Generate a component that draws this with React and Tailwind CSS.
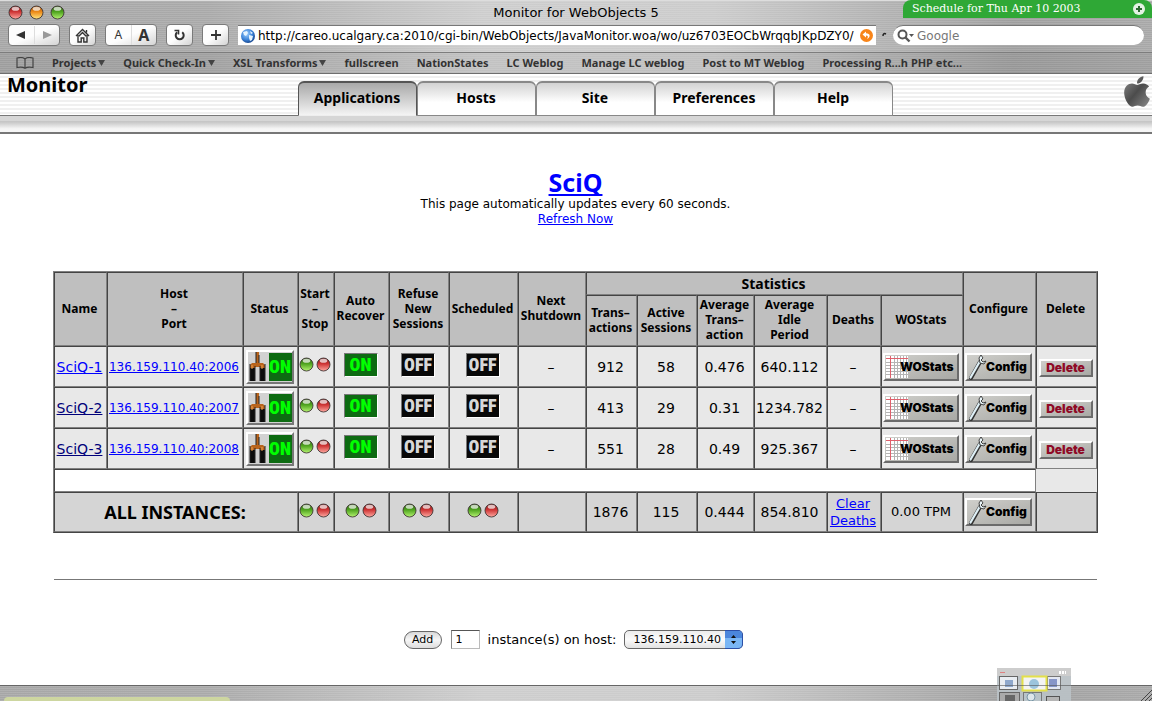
import React, { useState } from "react";
import { FaApple } from "react-icons/fa";

const bookmarks = [
  { label: "Projects", menu: true },
  { label: "Quick Check-In", menu: true },
  { label: "XSL Transforms", menu: true },
  { label: "fullscreen" },
  { label: "NationStates" },
  { label: "LC Weblog" },
  { label: "Manage LC weblog" },
  { label: "Post to MT Weblog" },
  { label: "Processing R...h PHP etc..." },
];

const tabs = ["Applications", "Hosts", "Site", "Preferences", "Help"];

const instances = [
  { name: "SciQ-1", port: 2006, transactions: "912", sessions: "58", average: "0.476", idle: "640.112" },
  { name: "SciQ-2", port: 2007, transactions: "413", sessions: "29", average: "0.31", idle: "1234.782", visited: true },
  { name: "SciQ-3", port: 2008, transactions: "551", sessions: "28", average: "0.49", idle: "925.367", visited: true },
];

const metal =
  "bg-[repeating-linear-gradient(0deg,rgba(255,255,255,0.12)_0px,rgba(255,255,255,0.12)_1px,transparent_1px,transparent_2px),linear-gradient(90deg,#a6a6a6_0%,#a9a9a9_18%,#cdcdcd_42%,#cbcbcb_62%,#9f9f9f_88%,#a8a8a8_100%)]";
const cell =
  "border border-t-[#444] border-l-[#444] border-r-[#808080] border-b-[#808080] py-0 pl-0 pr-[2px] text-center align-middle";
const head = `${cell} pb-[2px] bg-[#bfbfbf] font-['Noto_Sans',sans-serif] text-xs leading-[15px] font-bold`;
const data = `${cell} bg-[#e8e8e8]`;
const total = `${cell} bg-[#d5d5d5]`;
const link = "text-[#0000ff] underline [text-decoration-skip-ink:none]";
const bevel = "border-2 border-t-white border-l-white border-r-[#6b6b6b] border-b-[#6b6b6b] bg-linear-to-br from-[#cfcfcb] to-[#a9a9a5]";
const toolButton =
  "flex h-[22px] shrink-0 items-center justify-center rounded border border-[#7a7a7a] bg-linear-to-br from-[#fdfdfd] from-50% to-[#d4d4d4] text-[#333]";

// Shared gradients for the glass lights and the logo
const Gradients = () => (
  <svg className="absolute h-0 w-0" aria-hidden="true">
    <defs>
      <linearGradient id="green" x1="0" y1="0" x2="0" y2="1">
        <stop offset="0" stopColor="#2f5a14" />
        <stop offset="0.45" stopColor="#4fa51f" />
        <stop offset="1" stopColor="#b6f472" />
      </linearGradient>
      <linearGradient id="red" x1="0" y1="0" x2="0" y2="1">
        <stop offset="0" stopColor="#7a1414" />
        <stop offset="0.45" stopColor="#cf3535" />
        <stop offset="1" stopColor="#ffaaa2" />
      </linearGradient>
      <linearGradient id="amber" x1="0" y1="0" x2="0" y2="1">
        <stop offset="0" stopColor="#9a4a05" />
        <stop offset="0.45" stopColor="#ee8a18" />
        <stop offset="1" stopColor="#ffe680" />
      </linearGradient>
      <linearGradient id="steel" x1="0" y1="0" x2="1" y2="1">
        <stop offset="0" stopColor="#8c8c8c" />
        <stop offset="0.5" stopColor="#4c4c4c" />
        <stop offset="1" stopColor="#8a8a8a" />
      </linearGradient>
      <radialGradient id="globe" cx="0.4" cy="0.35" r="0.7">
        <stop offset="0" stopColor="#9fd0ff" />
        <stop offset="0.6" stopColor="#3a82d8" />
        <stop offset="1" stopColor="#123f86" />
      </radialGradient>
    </defs>
  </svg>
);

const Light = ({ color, label }) => (
  <button aria-label={label} className="block">
    <svg width="15" height="15" viewBox="0 0 15 15">
      <circle cx="7.5" cy="7.5" r="6.5" fill={`url(#${color})`} stroke="#3a3030" strokeOpacity="0.85" />
      <ellipse cx="7.5" cy="3.8" rx="3.8" ry="2" fill="#fff" fillOpacity="0.7" />
    </svg>
  </button>
);

const StartStop = () => (
  <div className="flex justify-center gap-[2px] pb-1">
    <Light color="green" label="Start" />
    <Light color="red" label="Stop" />
  </div>
);

const Toggle = ({ initial }) => {
  const [on, setOn] = useState(initial);
  return (
    <div className="flex justify-center pb-1">
      <button
        onClick={() => setOn(!on)}
        className={`h-6 w-[34px] border border-t-[#777] border-l-[#777] border-r-white border-b-white font-['Liberation_Sans_Narrow','Roboto_Condensed',sans-serif] text-lg leading-[22px] font-black ${
          on ? "bg-[#0d6b12] text-[#00ff00]" : "bg-[#080808] text-[#d8d8d8]"
        }`}
      >
        {on ? "ON" : "OFF"}
      </button>
    </div>
  );
};

const Pliers = () => (
  <svg width="18" height="30" viewBox="0 0 18 30">
    <path d="M8 0h3v11h4l2 2v16h-5V15H7v14H2V13l2-2h4z" fill="#b9641c" />
    <path d="M2 16h5v13H2zM12 16h5v13h-5z" fill="#0c0c0c" />
    <path d="M8 0v11M11 3v8M2 12v17M7 14v15M12 14v15M17 12v17" stroke="#222" fill="none" />
    <path d="M4 13v4M14 13v4" stroke="#f0a050" fill="none" />
  </svg>
);

const StatusButton = () => (
  <button className="inline-flex h-[34px] w-12 items-center justify-between border-2 border-t-white border-l-white border-r-[#777] border-b-[#777] bg-[#d2d2d2] align-middle">
    <Pliers />
    <span className="h-7 w-[23px] bg-[#0d6b12] font-['Liberation_Sans_Narrow','Roboto_Condensed',sans-serif] text-lg leading-7 font-black text-[#00ff00]">
      ON
    </span>
  </button>
);

const WOStatsButton = () => (
  <button className={`inline-flex h-7 w-[76px] items-center align-middle ${bevel}`}>
    <svg width="22" height="22" viewBox="0 0 22 22" className="-mr-2 ml-px shrink-0">
      <rect width="22" height="22" fill="#fff" />
      <path
        d="M0 6.5h22M0 9.5h22M0 12.5h22M0 15.5h22M0 18.5h22M8.5 0v22M11.5 0v22M14.5 0v22M17.5 0v22M20.5 0v22"
        stroke="#b4b4b4"
      />
      <path d="M0 2.5h22M4.5 0v22" stroke="#e0606c" />
    </svg>
    <span className="font-['Inter',sans-serif] text-xs font-black">WOStats</span>
  </button>
);

const ConfigButton = () => (
  <button className={`inline-flex h-7 w-[67px] items-center align-middle ${bevel}`}>
    <svg width="20" height="26" viewBox="0 0 20 26" className="-mr-px shrink-0">
      <path d="M4 24L13 8" stroke="#333" strokeWidth="4" strokeLinecap="round" />
      <path d="M3.5 23.5L12.5 8" stroke="#dff0f6" strokeWidth="2.2" strokeLinecap="round" />
      <path d="M14 1l-2 3 1 5 4 1 2-3-3 1-2-2 2-2z" fill="#eaf6fa" stroke="#333" strokeWidth="0.9" />
    </svg>
    <span className="font-['Inter',sans-serif] text-xs font-black">Config</span>
  </button>
);

const DeleteButton = () => (
  <button
    className={`inline-block h-[18px] w-[54px] align-middle font-['Inter',sans-serif] text-xs leading-[14px] font-black text-[#8f0a26] ${bevel}`}
  >
    Delete
  </button>
);

const Toolbar = () => (
  <div className="flex items-center gap-[9px] pr-2 pl-2">
    <div className={`${toolButton} w-[52px]`}>
      <button aria-label="Back" className="flex flex-1 justify-center">
        <svg width="10" height="10" viewBox="0 0 10 10">
          <path d="M9 1v8L0 5z" fill="#333" />
        </svg>
      </button>
      <button aria-label="Forward" className="flex flex-1 justify-center border-l border-[#ddd] py-1">
        <svg width="10" height="10" viewBox="0 0 10 10">
          <path d="M1 1v8l9-4z" fill="#999" />
        </svg>
      </button>
    </div>
    <button aria-label="Home" className={`${toolButton} w-[27px]`}>
      <svg width="15" height="15" viewBox="0 0 15 15" fill="none" stroke="#333" strokeWidth="1.4">
        <path d="M1 8l6.5-6.500L14 8M3 7v7h3.200v-4h2.600v4H12V7M11.500 4.500V2" />
        <path d="M3.800 8.200L7.500 4.500l3.700 3.700" />
      </svg>
    </button>
    <div className={`${toolButton} w-[52px] font-['Noto_Sans',sans-serif]`}>
      <button aria-label="Smaller text" className="flex-1 text-xs leading-5">
        A
      </button>
      <button aria-label="Larger text" className="flex-1 border-l border-[#ddd] text-base leading-5 font-bold">
        A
      </button>
    </div>
    <button aria-label="Reload" className={`${toolButton} w-[27px]`}>
      <svg width="13" height="14" viewBox="0 0 13 14" fill="none" stroke="#333" strokeWidth="2">
        <path d="M9.200 4.200a4 4 0 1 1-5 0" />
        <path d="M1.500 2.500h4v4" strokeWidth="1.600" />
      </svg>
    </button>
    <button aria-label="Add bookmark" className={`${toolButton} w-[27px]`}>
      <svg width="12" height="12" viewBox="0 0 12 12" stroke="#333" strokeWidth="1.800">
        <path d="M6 1v10M1 6h10" />
      </svg>
    </button>
    <div className="flex h-5 min-w-0 flex-1 items-center border-t border-[#777] bg-white px-[3px]">
      <svg width="14" height="14" viewBox="0 0 14 14" className="shrink-0">
        <circle cx="7" cy="7" r="7" fill="url(#globe)" />
        <path d="M2 3l4-1 1 2-2 3-2-1zM8 6l4 1-1 4-2 1-1-3zM9 2l3 2-2 1z" fill="#e6f4ff" />
      </svg>
      <input
        aria-label="Address"
        defaultValue="http://careo.ucalgary.ca:2010/cgi-bin/WebObjects/JavaMonitor.woa/wo/uz6703EOCbWrqqbJKpDZY0/"
        className="ml-[3px] min-w-0 flex-1 text-xs outline-none"
      />
      <button aria-label="SnapBack" className="shrink-0">
        <svg width="13" height="13" viewBox="0 0 13 13">
          <circle cx="6.500" cy="6.500" r="6.500" fill="#f8851a" />
          <path d="M6 2.500L2.500 5.500 6 8.500V6.500c2 0 2.500 1 1 3.500 4-2 3.500-5.500-1-5.700z" fill="#fff" />
        </svg>
      </button>
    </div>
    <svg width="5" height="6" viewBox="0 0 5 6" className="-mx-[3px] shrink-0">
      <path d="M1 4c0-2 1-3 3-2" stroke="#222" strokeWidth="1.500" fill="none" />
    </svg>
    <div className="flex h-5 w-[251px] items-center rounded-full border-t border-[#777] bg-white pl-1">
      <svg width="18" height="14" viewBox="0 0 18 14" className="shrink-0">
        <circle cx="5.500" cy="5.500" r="4" fill="none" stroke="#555" strokeWidth="2" />
        <path d="M8.500 8.500l4 4" stroke="#555" strokeWidth="2.400" />
        <path d="M12 5h5l-2.500 3z" fill="#555" />
      </svg>
      <input
        aria-label="Search"
        placeholder="Google"
        className="ml-[2px] min-w-0 flex-1 text-xs outline-none placeholder:text-[#777]"
      />
    </div>
  </div>
);

const BrowserChrome = () => (
  <header className={metal}>
    <div className="grid h-6 grid-cols-[1fr_auto_1fr] items-center border-t border-[#ddd]">
      <div className="flex gap-[6px] pl-2">
        <Light color="red" label="Close" />
        <Light color="amber" label="Minimize" />
        <Light color="green" label="Zoom" />
      </div>
      <h1 className="text-[13px]">Monitor for WebObjects 5</h1>
    </div>
    <div className="pb-[6px]">
      <Toolbar />
    </div>
    <nav className="flex h-[22px] items-center gap-[18px] border-t border-b border-t-[#7d7d7d] border-b-[#6e6e6e] bg-black/5 pl-4 font-['Noto_Sans',sans-serif] text-[11px] font-bold text-[#333]">
      <button aria-label="Bookmarks">
        <svg width="18" height="12" viewBox="0 0 18 12" fill="none" stroke="#444" strokeWidth="1.200">
          <path d="M9 2C7 0 3 0.500 1 1v9.500c2.500-.6 6-.6 8 .7 2-1.300 5.500-1.300 8-.7V1c-2-.5-6-1-8 1zM9 2v9" />
        </svg>
      </button>
      {bookmarks.map((b) => (
        <a key={b.label} href="#" className="flex items-center gap-[2px] whitespace-nowrap">
          {b.label}
          {b.menu && (
            <svg width="7" height="6" viewBox="0 0 7 6">
              <path d="M0 0h7L3.500 6z" fill="#444" />
            </svg>
          )}
        </a>
      ))}
    </nav>
  </header>
);

const MonitorHeader = () => {
  const [active, setActive] = useState("Applications");
  return (
    <div className="font-['Noto_Sans',sans-serif]">
      <div className="grid h-[42px] grid-cols-[1fr_auto_1fr] border-b border-[#777] bg-[repeating-linear-gradient(180deg,#fff_0px,#fff_2px,#f0f0f0_2px,#f0f0f0_4px)]">
        <div className="pl-[7px] text-xl leading-[22px] font-bold">Monitor</div>
        <nav className="-mb-px flex self-end pl-[38px]">
          {tabs.map((tab) => (
            <button
              key={tab}
              onClick={() => setActive(tab)}
              className={`h-[35px] w-[119px] rounded-t-md border border-t-2 pb-[2px] text-sm font-bold ${
                active === tab
                  ? "border-[#555] border-b-[#eee] bg-linear-to-b from-[#a9a9a9] to-[#f4f4f4]"
                  : "border-[#888] bg-linear-to-b from-[#d2d2d2] to-white to-60%"
              }`}
            >
              {tab}
            </button>
          ))}
        </nav>
        <FaApple className="h-[35px] w-[30px] justify-self-end fill-[url(#steel)]" />
      </div>
      <div className="h-[18px] border-b-2 border-[#777] bg-linear-to-b from-[#d6d6d6] from-30% via-[#c4c4c4] via-35% to-[#f6f6f6] to-80%" />
    </div>
  );
};

const InstanceTable = () => (
  <table className="w-full table-fixed border-separate border-spacing-0 border border-t-[#808080] border-l-[#808080] border-r-[#444] border-b-[#444]">
    <colgroup>
      <col className="w-[53px]" />
      <col className="w-[136px]" />
      <col className="w-[55px]" />
      <col className="w-[36px]" />
      <col className="w-[55px]" />
      <col className="w-[60px]" />
      <col className="w-[69px]" />
      <col className="w-[68px]" />
      <col className="w-[51px]" />
      <col className="w-[60px]" />
      <col className="w-[57px]" />
      <col className="w-[73px]" />
      <col className="w-[54px]" />
      <col className="w-[82px]" />
      <col className="w-[73px]" />
      <col className="w-[61px]" />
    </colgroup>
    <thead>
      <tr className="h-[23px]">
        <th rowSpan={2} className={head}>Name</th>
        <th rowSpan={2} className={head}>Host<br />–<br />Port</th>
        <th rowSpan={2} className={head}>Status</th>
        <th rowSpan={2} className={head}>Start<br />–<br />Stop</th>
        <th rowSpan={2} className={head}>Auto<br />Recover</th>
        <th rowSpan={2} className={head}>Refuse<br />New<br />Sessions</th>
        <th rowSpan={2} className={head}>Scheduled</th>
        <th rowSpan={2} className={head}>Next<br />Shutdown</th>
        <th colSpan={6} className={`${cell} bg-[#bfbfbf] font-['Noto_Sans',sans-serif] text-sm leading-5 font-bold`}>
          Statistics
        </th>
        <th rowSpan={2} className={head}>Configure</th>
        <th rowSpan={2} className={head}>Delete</th>
      </tr>
      <tr className="h-[51px]">
        <th className={head}>Trans–<br />actions</th>
        <th className={head}>Active<br />Sessions</th>
        <th className={head}>Average<br />Trans–<br />action</th>
        <th className={head}>Average<br />Idle<br />Period</th>
        <th className={head}>Deaths</th>
        <th className={head}>WOStats</th>
      </tr>
    </thead>
    <tbody className="text-sm">
      {instances.map((row) => (
        <tr key={row.name} className="h-[41px]">
          <td className={data}>
            <a
              href="#"
              className={`underline [text-decoration-skip-ink:none] ${row.visited ? "text-[#00007a]" : "text-[#0000ff]"}`}
            >
              {row.name}
            </a>
          </td>
          <td className={`${data} text-xs`}>
            <a href="#" className={link}>
              136.159.110.40:{row.port}
            </a>
          </td>
          <td className={data}><StatusButton /></td>
          <td className={data}><StartStop /></td>
          <td className={data}><Toggle initial={true} /></td>
          <td className={data}><Toggle initial={false} /></td>
          <td className={data}><Toggle initial={false} /></td>
          <td className={data}>–</td>
          <td className={data}>{row.transactions}</td>
          <td className={data}>{row.sessions}</td>
          <td className={data}>{row.average}</td>
          <td className={data}>{row.idle}</td>
          <td className={data}>–</td>
          <td className={data}><WOStatsButton /></td>
          <td className={data}><ConfigButton /></td>
          <td className={data}><DeleteButton /></td>
        </tr>
      ))}
      <tr className="h-[23px]">
        <td colSpan={15} className={`${cell} bg-white`}></td>
        <td className="bg-[#e8e8e8]"></td>
      </tr>
      <tr className="h-[40px]">
        <td colSpan={3} className={`${total} font-['Noto_Sans',sans-serif] text-lg font-bold`}>ALL INSTANCES:</td>
        <td className={total}><StartStop /></td>
        <td className={total}><StartStop /></td>
        <td className={total}><StartStop /></td>
        <td className={total}><StartStop /></td>
        <td className={total}></td>
        <td className={total}>1876</td>
        <td className={total}>115</td>
        <td className={total}>0.444</td>
        <td className={total}>854.810</td>
        <td className={`${total} text-[13px] leading-[17px]`}>
          <a href="#" className={link}>Clear Deaths</a>
        </td>
        <td className={`${total} text-[13px]`}>0.00 TPM</td>
        <td className={total}><ConfigButton /></td>
        <td className={total}></td>
      </tr>
    </tbody>
  </table>
);

const AddInstances = () => (
  <form className="flex items-center justify-center pr-1 text-[13px]" onSubmit={(e) => e.preventDefault()}>
    <button className="h-[18px] w-[38px] rounded-full border border-[#666] bg-linear-to-b from-[#d8d8d8] via-[#f6f6f6] to-[#ddd] text-[11px] leading-4">
      Add
    </button>
    <input
      id="count"
      defaultValue="1"
      className="ml-[9px] h-[19px] w-[29px] border border-t-[#555] border-l-[#888] border-r-[#bbb] border-b-[#bbb] pl-1 text-[11px] outline-none"
    />
    <label htmlFor="count" className="mx-2">instance(s) on host:</label>
    <div className="relative h-[19px] w-[119px]">
      <select
        aria-label="Host"
        className="block h-full w-full appearance-none rounded-[5px] border border-[#666] bg-linear-to-b from-[#ececec] via-[#fbfbfb] to-[#e2e2e2] pl-2 text-[11px]"
      >
        <option>136.159.110.40</option>
      </select>
      <svg width="18" height="19" viewBox="0 0 18 19" className="pointer-events-none absolute top-0 right-0">
        <path d="M0 0h13a5 5 0 0 1 5 5v9a5 5 0 0 1-5 5H0z" fill="#2b4fa8" />
        <path d="M0 1h13a4 4 0 0 1 4 4v9a4 4 0 0 1-4 4H0z" fill="#7ab6f5" />
        <path d="M0 1h13a4 4 0 0 1 4 4v3H0z" fill="#4b86dc" />
        <path d="M6 8h5L8.500 5zM6 11h5l-2.500 3z" fill="#111" />
      </svg>
    </div>
  </form>
);

// Floating pager that sits over the bottom edge of the window
const Pager = () => (
  <svg width="74" height="33" viewBox="0 0 74 33" className="absolute right-[81px] bottom-0">
    <rect width="74" height="33" fill="#c4c4c4" fillOpacity="0.85" />
    <rect y="8" width="74" height="25" fill="#b4bfc6" fillOpacity="0.6" />
    <path d="M3 4.500h5" stroke="#e08080" />
    <path d="M62 3h2v3h-2zM65 3h2v3h-2zM68 3h1v3h-1z" fill="#fff" />
    <rect x="2.500" y="8.500" width="18" height="13" fill="#e9edf2" stroke="#666" />
    <rect x="8" y="12" width="8" height="7" fill="#8fa8cc" />
    <rect x="50.500" y="8.500" width="13" height="13" fill="#e4e8f2" stroke="#777" />
    <rect x="52" y="11" width="8" height="8" fill="#8796c8" />
    <rect x="25.500" y="8.500" width="24" height="14" fill="#f4f4f4" stroke="#e3e04a" strokeWidth="2" />
    <circle cx="37" cy="16" r="5" fill="#9cc4dc" />
    <path d="M0 17.500h74" stroke="#555" strokeOpacity="0.6" />
    <rect x="2.500" y="24.500" width="20" height="12" fill="#aaa" stroke="#666" />
    <rect x="8" y="27" width="10" height="6" fill="#666" />
    <rect x="26.500" y="24.500" width="18" height="12" fill="#b9c4c9" stroke="#777" />
    <circle cx="34" cy="29" r="4" fill="#dde6ea" stroke="#7a96a6" />
    <rect x="49.500" y="28.500" width="13" height="8" fill="#b5b5b5" stroke="#555" />
  </svg>
);

export default function App() {
  return (
    <div className="relative flex min-h-screen flex-col overflow-hidden bg-white font-['DejaVu_Sans',sans-serif] text-black">
      <Gradients />
      <BrowserChrome />
      <MonitorHeader />

      <main className="flex-1 pr-[54px] pl-[53px]">
        <div className="pt-[33px] pb-11 text-center text-xs leading-[15px]">
          <h2 className="font-['Noto_Sans',sans-serif] text-[25px] leading-[30px] font-bold">
            <a href="#" className={link}>SciQ</a>
          </h2>
          <p>This page automatically updates every 60 seconds.</p>
          <a href="#" className={link}>Refresh Now</a>
        </div>
        <InstanceTable />
        <hr className="mx-px mt-[46px] mb-[50px] border-[#777]" />
        <AddInstances />
      </main>

      <footer className={`relative h-4 border-t border-[#666] ${metal}`}>
        <div className="absolute bottom-0 left-1 h-1 w-[226px] rounded-t bg-[#cdd6a0]" />
        <svg width="12" height="12" viewBox="0 0 12 12" className="absolute right-0 bottom-0" stroke="#444">
          <path d="M1 12L12 1M5 12l7-7M9 12l3-3" />
        </svg>
      </footer>

      <div className="absolute top-0 right-0 flex h-[18px] w-[249px] items-center justify-between rounded-t-lg bg-[#2fa836] pr-[7px] pl-[9px] font-['DejaVu_Serif',serif] text-[11px] text-white">
        Schedule for Thu Apr 10 2003
        <svg width="12" height="12" viewBox="0 0 12 12">
          <circle cx="6" cy="6" r="6" fill="#e4f2e4" />
          <path d="M6 3v6M3 6h6" stroke="#2c6a30" strokeWidth="2" />
        </svg>
      </div>
      <Pager />
    </div>
  );
}
